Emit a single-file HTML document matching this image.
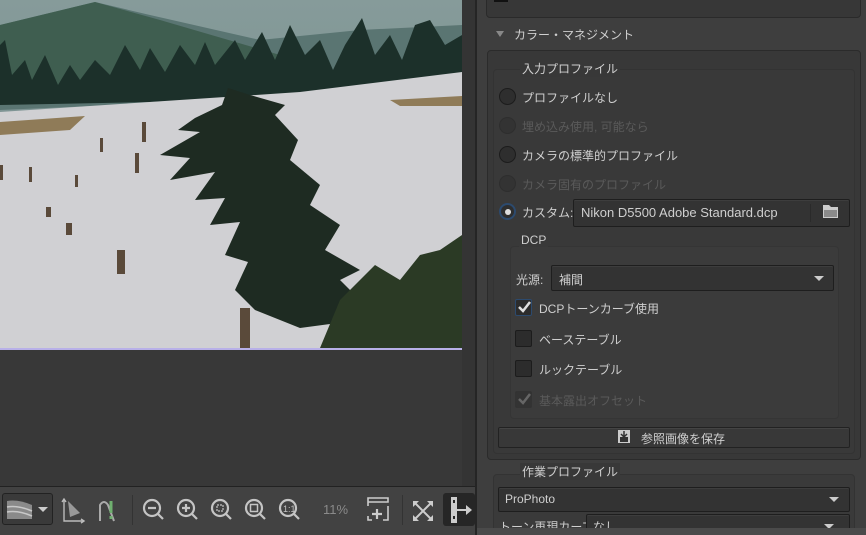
<!DOCTYPE html>
<html><head><meta charset="utf-8"><style>
*{box-sizing:border-box;margin:0;padding:0}
html,body{width:866px;height:535px;overflow:hidden}
body{background:#3a3a3a;font-family:"Liberation Sans","Noto Sans CJK JP",sans-serif;font-size:12px;color:#cfcfcf;position:relative}
.a{position:absolute}
.t{position:absolute;white-space:nowrap;font-size:12px}
.dim{color:#5a5a5a}
.radio{position:absolute;width:17px;height:17px;border-radius:50%;background:#2e2e2e;border:1px solid #1c1c1c}
.cb{position:absolute;width:17px;height:17px;border-radius:2px;background:#2c2c2c;border:1px solid #1c1c1c}
.sel{position:absolute;background:#333;border:1px solid #1e1e1e;border-radius:2px;box-shadow:inset 0 1px 0 #3d3d3d}
.arr{position:absolute;width:0;height:0;border-left:5px solid transparent;border-right:5px solid transparent;border-top:5px solid #ccc}
</style></head><body>
<div class="a" style="left:0;top:0;width:475px;height:486px;background:#383838"></div>
<div class="a" style="left:462px;top:0;width:13px;height:486px;background:#343434"></div>
<svg class="a" style="left:0;top:0" width="462" height="350" viewBox="0 0 462 350">
<defs><linearGradient id="sk" x1="0" y1="0" x2="0" y2="1"><stop offset="0" stop-color="#869b9a"/><stop offset="1" stop-color="#6e8786"/></linearGradient></defs>
<rect width="462" height="350" fill="url(#sk)"/>
<path d="M0 25 L95 2 L150 15 L260 40 L360 30 L462 25 L462 90 L0 110Z" fill="#5a7572"/>
<path d="M0 25 L95 2 L160 20 L280 55 L300 80 L0 90Z" fill="#3f5e50"/>
<path d="M0 105 L0 45 L5 40 L12 75 L25 60 L32 80 L45 55 L58 85 L70 65 L80 80 L95 60 L110 75 L125 45 L140 70 L150 48 L165 72 L180 45 L195 65 L205 42 L215 65 L235 40 L245 60 L262 32 L275 60 L290 25 L305 55 L320 40 L333 70 L345 45 L362 18 L375 55 L390 35 L402 60 L415 25 L430 20 L445 45 L462 35 L462 80 L300 95 L150 102Z" fill="#1c302a"/>
<path d="M0 112 L120 104 L300 92 L462 72 L462 350 L0 350Z" fill="#d0d0d3"/>
<path d="M0 122 L85 116 L70 130 L0 135Z" fill="#8f7b58"/>
<path d="M390 100 L462 96 L462 106 L400 106Z" fill="#8f7b58"/>
<path d="M228 88 L222 105 L195 118 L178 130 L200 132 L160 155 L190 158 L170 180 L215 172 L195 200 L225 198 L210 225 L240 222 L225 255 L248 262 L235 290 L255 310 L300 328 L345 322 L360 300 L340 280 L360 270 L325 250 L340 225 L310 205 L320 185 L290 160 L298 140 L275 115 L285 105 L250 95Z" fill="#1e2b22"/>
<path d="M340 300 L375 265 L400 280 L420 255 L440 250 L462 235 L462 348 L320 348Z" fill="#2b3a25"/>
<g fill="#5a4a3a"><rect x="240" y="308" width="10" height="42"/><rect x="117" y="250" width="8" height="24"/><rect x="66" y="223" width="6" height="12"/><rect x="46" y="207" width="5" height="10"/><rect x="135" y="153" width="4" height="20"/><rect x="142" y="122" width="4" height="20"/><rect x="29" y="167" width="3" height="15"/><rect x="0" y="165" width="3" height="15"/><rect x="75" y="175" width="3" height="12"/><rect x="100" y="138" width="3" height="14"/></g>
<rect x="0" y="348" width="462" height="2" fill="#b8b0e8"/>
</svg>
<div class="a" style="left:475px;top:0;width:2px;height:535px;background:#252525"></div>
<div class="a" style="left:0;top:486px;width:475px;height:1px;background:#222"></div>
<div class="a" style="left:0;top:487px;width:475px;height:48px;background:#424242"></div>
<div class="a" style="left:2px;top:493px;width:51px;height:32px;border:1px solid #222;border-radius:3px;background:#3a3a3a"></div>
<svg class="a" style="left:6px;top:497px" width="44" height="26"><path d="M1 4 Q12 2 26 8 L26 22 L1 22Z" fill="#8a8a8a"/><path d="M1 10 Q12 8 26 14 M1 15 Q12 13 26 19" stroke="#c8c8c8" stroke-width="1.5" fill="none"/><path d="M32 10 L42 10 L37 15Z" fill="#ccc"/></svg>
<svg class="a" style="left:60px;top:497px" width="26" height="28"><path d="M4 2 V24 H24 M2 5 L4 2 L6 5 M21 22 L24 24 L21 26" stroke="#bbb" fill="none" stroke-width="1.4"/><path d="M8 4 L20 16 L10 20Z" fill="#999"/></svg>
<svg class="a" style="left:96px;top:497px" width="26" height="28"><path d="M4 24 V8 Q8 2 12 8 L18 24" stroke="#aaa" fill="none" stroke-width="2"/><path d="M15 4 V16 M15 19 V22" stroke="#6fb06f" stroke-width="3"/></svg>
<div class="a" style="left:132px;top:495px;width:1px;height:30px;background:#333"></div>
<svg class="a" style="left:140px;top:496px" width="170" height="30" fill="none" stroke="#c4c4c4" stroke-width="2.2">
<g><circle cx="12" cy="12" r="8"/><path d="M18 18 L23 23 M8 12 H16"/></g>
<g transform="translate(34,0)"><circle cx="12" cy="12" r="8"/><path d="M18 18 L23 23 M8 12 H16 M12 8 V16"/></g>
<g transform="translate(68,0)"><circle cx="12" cy="12" r="8"/><path d="M18 18 L23 23"/><rect x="9" y="9" width="6" height="6" stroke-width="1.2" stroke-dasharray="2 1"/></g>
<g transform="translate(102,0)"><circle cx="12" cy="12" r="8"/><path d="M18 18 L23 23"/><rect x="8.5" y="8.5" width="7" height="7" stroke-width="1.5"/></g>
<g transform="translate(136,0)"><circle cx="12" cy="12" r="8"/><path d="M18 18 L23 23"/><text x="7" y="16" font-size="9" fill="#c4c4c4" stroke="none" font-family="Liberation Sans">1:1</text></g>
</svg>
<div class="t" style="left:323px;top:502px;color:#8a8a8a;font-size:13px">11%</div>
<svg class="a" style="left:366px;top:496px" width="26" height="28" fill="none" stroke="#ccc" stroke-width="1.6"><path d="M2 2 H22 V6 H2Z M2 6 V10 M22 10 V24 H17 M6 24 H2 V20"/><path d="M11 13 V23 M6 18 H16" stroke-width="2.2"/></svg>
<div class="a" style="left:402px;top:495px;width:1px;height:30px;background:#333"></div>
<svg class="a" style="left:411px;top:499px" width="24" height="24" stroke="#ccc" stroke-width="2" fill="none"><path d="M4 4 L20 20 M20 4 L4 20"/><path d="M2 2 H8 L2 8Z M22 2 H16 L22 8Z M2 22 H8 L2 16Z M22 22 H16 L22 16Z" fill="#ccc" stroke="none"/></svg>
<div class="a" style="left:443px;top:493px;width:32px;height:33px;background:#262626;border-radius:3px"></div>
<svg class="a" style="left:447px;top:496px" width="26" height="28"><rect x="4" y="1" width="6" height="26" fill="#ccc"/><rect x="6" y="4" width="2" height="3" fill="#262626"/><rect x="6" y="20" width="2" height="3" fill="#262626"/><path d="M10 14 H20" stroke="#ccc" stroke-width="2"/><path d="M19 9 L25 14 L19 19Z" fill="#ccc"/></svg>
<div class="a" style="left:477px;top:0;width:389px;height:535px;background:#3e3e3e"></div>
<div class="a" style="left:486px;top:-5px;width:375px;height:23px;background:#373737;border:1px solid #2a2a2a;border-radius:4px"></div>
<div class="a" style="left:494px;top:0;width:14px;height:2px;background:#111"></div>
<div class="a" style="left:496px;top:31px;width:0;height:0;border-left:4px solid transparent;border-right:4px solid transparent;border-top:6px solid #888"></div>
<div class="t" style="left:514px;top:26px">カラー・マネジメント</div>
<div class="a" style="left:487px;top:50px;width:374px;height:410px;background:#383838;border:1px solid #2b2b2b;border-radius:4px"></div>
<div class="a" style="left:493px;top:69px;width:362px;height:385px;border:1px solid #333;border-radius:4px;background:#393939"></div>
<div class="t" style="left:520px;top:60px;background:#383838;padding:0 2px">入力プロファイル</div>
<div class="radio" style="left:499px;top:88px"></div><div class="t" style="left:522px;top:89px">プロファイルなし</div>
<div class="radio" style="left:499px;top:117px;background:#333;border-color:#2e2e2e"></div><div class="t dim" style="left:522px;top:118px">埋め込み使用, 可能なら</div>
<div class="radio" style="left:499px;top:146px"></div><div class="t" style="left:522px;top:147px">カメラの標準的プロファイル</div>
<div class="radio" style="left:499px;top:175px;background:#333;border-color:#2e2e2e"></div><div class="t dim" style="left:522px;top:176px">カメラ固有のプロファイル</div>
<div class="radio" style="left:499px;top:203px;border:2px solid #2c4a6e;background:#2e2e2e"></div><div class="a" style="left:505px;top:209px;width:6px;height:6px;border-radius:50%;background:#ddd"></div>
<div class="t" style="left:522px;top:204px">カスタム:</div>
<div class="sel" style="left:573px;top:199px;width:277px;height:28px"></div>
<div class="t" style="left:581px;top:205px;color:#cfcfcf;font-size:13px">Nikon D5500 Adobe Standard.dcp</div>
<div class="a" style="left:810px;top:204px;width:1px;height:18px;background:#2a2a2a"></div>
<svg class="a" style="left:822px;top:204px" width="18" height="15"><path d="M1 1 H7 L9 3 H16 V14 H1Z" fill="#ccc"/><path d="M2 6 H15 V13 H2Z" fill="#8a8a8a"/></svg>
<div class="a" style="left:510px;top:246px;width:329px;height:173px;background:#3b3b3b;border:1px solid #353535;border-radius:4px"></div>
<div class="t" style="left:519px;top:233px;background:#393939;padding:0 2px">DCP</div>
<div class="t" style="left:516px;top:271px">光源:</div>
<div class="sel" style="left:551px;top:265px;width:283px;height:26px"></div>
<div class="t" style="left:559px;top:271px">補間</div>
<div class="arr" style="left:814px;top:276px"></div>
<div class="cb" style="left:515px;top:299px;border-color:#2c4a6e"></div>
<svg class="a" style="left:516px;top:299px" width="16" height="16"><path d="M3 8 L7 12 L14 3" stroke="#e0e0e0" stroke-width="2.5" fill="none"/></svg>
<div class="t" style="left:539px;top:300px">DCPトーンカーブ使用</div>
<div class="cb" style="left:515px;top:330px"></div><div class="t" style="left:539px;top:331px">ベーステーブル</div>
<div class="cb" style="left:515px;top:360px"></div><div class="t" style="left:539px;top:361px">ルックテーブル</div>
<div class="cb" style="left:515px;top:391px;background:#333;border-color:#333"></div>
<svg class="a" style="left:516px;top:391px" width="16" height="16"><path d="M3 8 L7 12 L14 3" stroke="#666" stroke-width="2.5" fill="none"/></svg>
<div class="t dim" style="left:539px;top:392px">基本露出オフセット</div>
<div class="a" style="left:498px;top:427px;width:352px;height:21px;background:#383838;border:1px solid #222;border-radius:2px;box-shadow:inset 0 1px 0 #444"></div>
<svg class="a" style="left:617px;top:429px" width="14" height="15"><rect x="1" y="1" width="12" height="13" fill="#ccc"/><rect x="3" y="8" width="8" height="5" fill="#333"/><path d="M7 2 V7 M4 5 L7 8 L10 5" stroke="#333" stroke-width="1.5" fill="none"/></svg>
<div class="t" style="left:641px;top:430px">参照画像を保存</div>
<div class="a" style="left:493px;top:474px;width:362px;height:70px;border:1px solid #333;border-radius:4px;background:#3a3a3a"></div>
<div class="t" style="left:520px;top:463px;background:#383838;padding:0 2px">作業プロファイル</div>
<div class="sel" style="left:498px;top:487px;width:352px;height:25px"></div>
<div class="t" style="left:505px;top:492px">ProPhoto</div>
<div class="arr" style="left:829px;top:497px"></div>
<div class="t" style="left:499px;top:518px">トーン再現カーブ:</div>
<div class="sel" style="left:586px;top:514px;width:264px;height:25px"></div>
<div class="t" style="left:593px;top:518px">なし</div>
<div class="arr" style="left:824px;top:524px"></div>
<div class="a" style="left:477px;top:528px;width:389px;height:7px;background:#4a4a4a"></div>
</body></html>
